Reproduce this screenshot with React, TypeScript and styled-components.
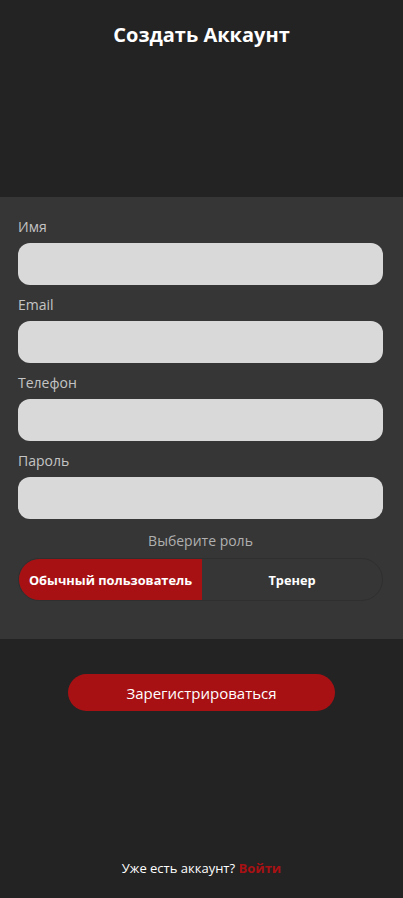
import React, { useState } from "react";
import styled, { createGlobalStyle } from "styled-components";

const Global = createGlobalStyle`
  html, body { margin: 0; padding: 0; background: #232323; }
  body { font-family: "Open Sans", "Noto Sans", sans-serif; }
  * { box-sizing: border-box; }
`;

const Page = styled.div`
  min-height: 100vh;
  display: flex;
  flex-direction: column;
  background: #232323;
  color: #fff;
`;

const Header = styled.header`
  height: 197px;
  padding-top: 21px;
  display: flex;
  justify-content: center;
  align-items: flex-start;
`;

const Title = styled.h1`
  margin: 0;
  font-size: 20px;
  line-height: 28px;
  font-weight: 700;
  color: #fff;
`;

const Panel = styled.section`
  background: #363636;
  padding: 20px 20px 38px 18px;
  display: flex;
  flex-direction: column;
`;

const FieldList = styled.div`
  display: flex;
  flex-direction: column;
  gap: 10px;
`;

const Field = styled.div`
  display: flex;
  flex-direction: column;
  gap: 7px;
`;

const Label = styled.label`
  font-size: 14px;
  line-height: 19px;
  color: #c4c4c4;
`;

const Input = styled.input`
  height: 42px;
  width: 100%;
  border: none;
  border-radius: 12px;
  background: #d9d9d9;
  padding: 0 14px;
  font-family: inherit;
  font-size: 14px;
  outline: none;
`;

const RoleTitle = styled.div`
  margin-top: 12px;
  text-align: center;
  font-size: 14px;
  line-height: 19px;
  color: #b0b0b0;
`;

const Toggle = styled.div`
  margin-top: 8px;
  display: grid;
  grid-template-columns: 183px 1fr;
  height: 43px;
  border: 1px solid #2f2f2f;
  border-radius: 22px;
  overflow: hidden;
`;

const RoleButton = styled.button<{ $active: boolean }>`
  border: none;
  background: ${(p) => (p.$active ? "#a81114" : "transparent")};
  color: #fff;
  font-family: inherit;
  font-weight: 700;
  font-size: 12.8px;
  cursor: pointer;
  padding: 0;
`;

const Actions = styled.div`
  display: flex;
  justify-content: center;
  padding-top: 35px;
`;

const Submit = styled.button`
  width: 267px;
  height: 37px;
  border: none;
  border-radius: 19px;
  background: #a81114;
  color: #fff;
  font-family: inherit;
  font-size: 15px;
  cursor: pointer;
`;

const Footer = styled.footer`
  margin-top: auto;
  padding-bottom: 21px;
  text-align: center;
  font-size: 13px;
  line-height: 18px;
  color: #fff;
`;

const LinkText = styled.a`
  color: #a81114;
  font-weight: 700;
  text-decoration: none;
  cursor: pointer;
`;

const fields = [
  { id: "name", label: "Имя", type: "text" },
  { id: "email", label: "Email", type: "email" },
  { id: "phone", label: "Телефон", type: "tel" },
  { id: "password", label: "Пароль", type: "password" },
];

export default function App() {
  const [role, setRole] = useState<"user" | "trainer">("user");
  return (
    <Page>
      <Global />
      <Header>
        <Title>Создать Аккаунт</Title>
      </Header>
      <Panel>
        <FieldList>
          {fields.map((f) => (
            <Field key={f.id}>
              <Label htmlFor={f.id}>{f.label}</Label>
              <Input id={f.id} type={f.type} />
            </Field>
          ))}
        </FieldList>
        <RoleTitle>Выберите роль</RoleTitle>
        <Toggle>
          <RoleButton $active={role === "user"} onClick={() => setRole("user")}>
            Обычный пользователь
          </RoleButton>
          <RoleButton $active={role === "trainer"} onClick={() => setRole("trainer")}>
            Тренер
          </RoleButton>
        </Toggle>
      </Panel>
      <Actions>
        <Submit>Зарегистрироваться</Submit>
      </Actions>
      <Footer>
        Уже есть аккаунт? <LinkText>Войти</LinkText>
      </Footer>
    </Page>
  );
}
